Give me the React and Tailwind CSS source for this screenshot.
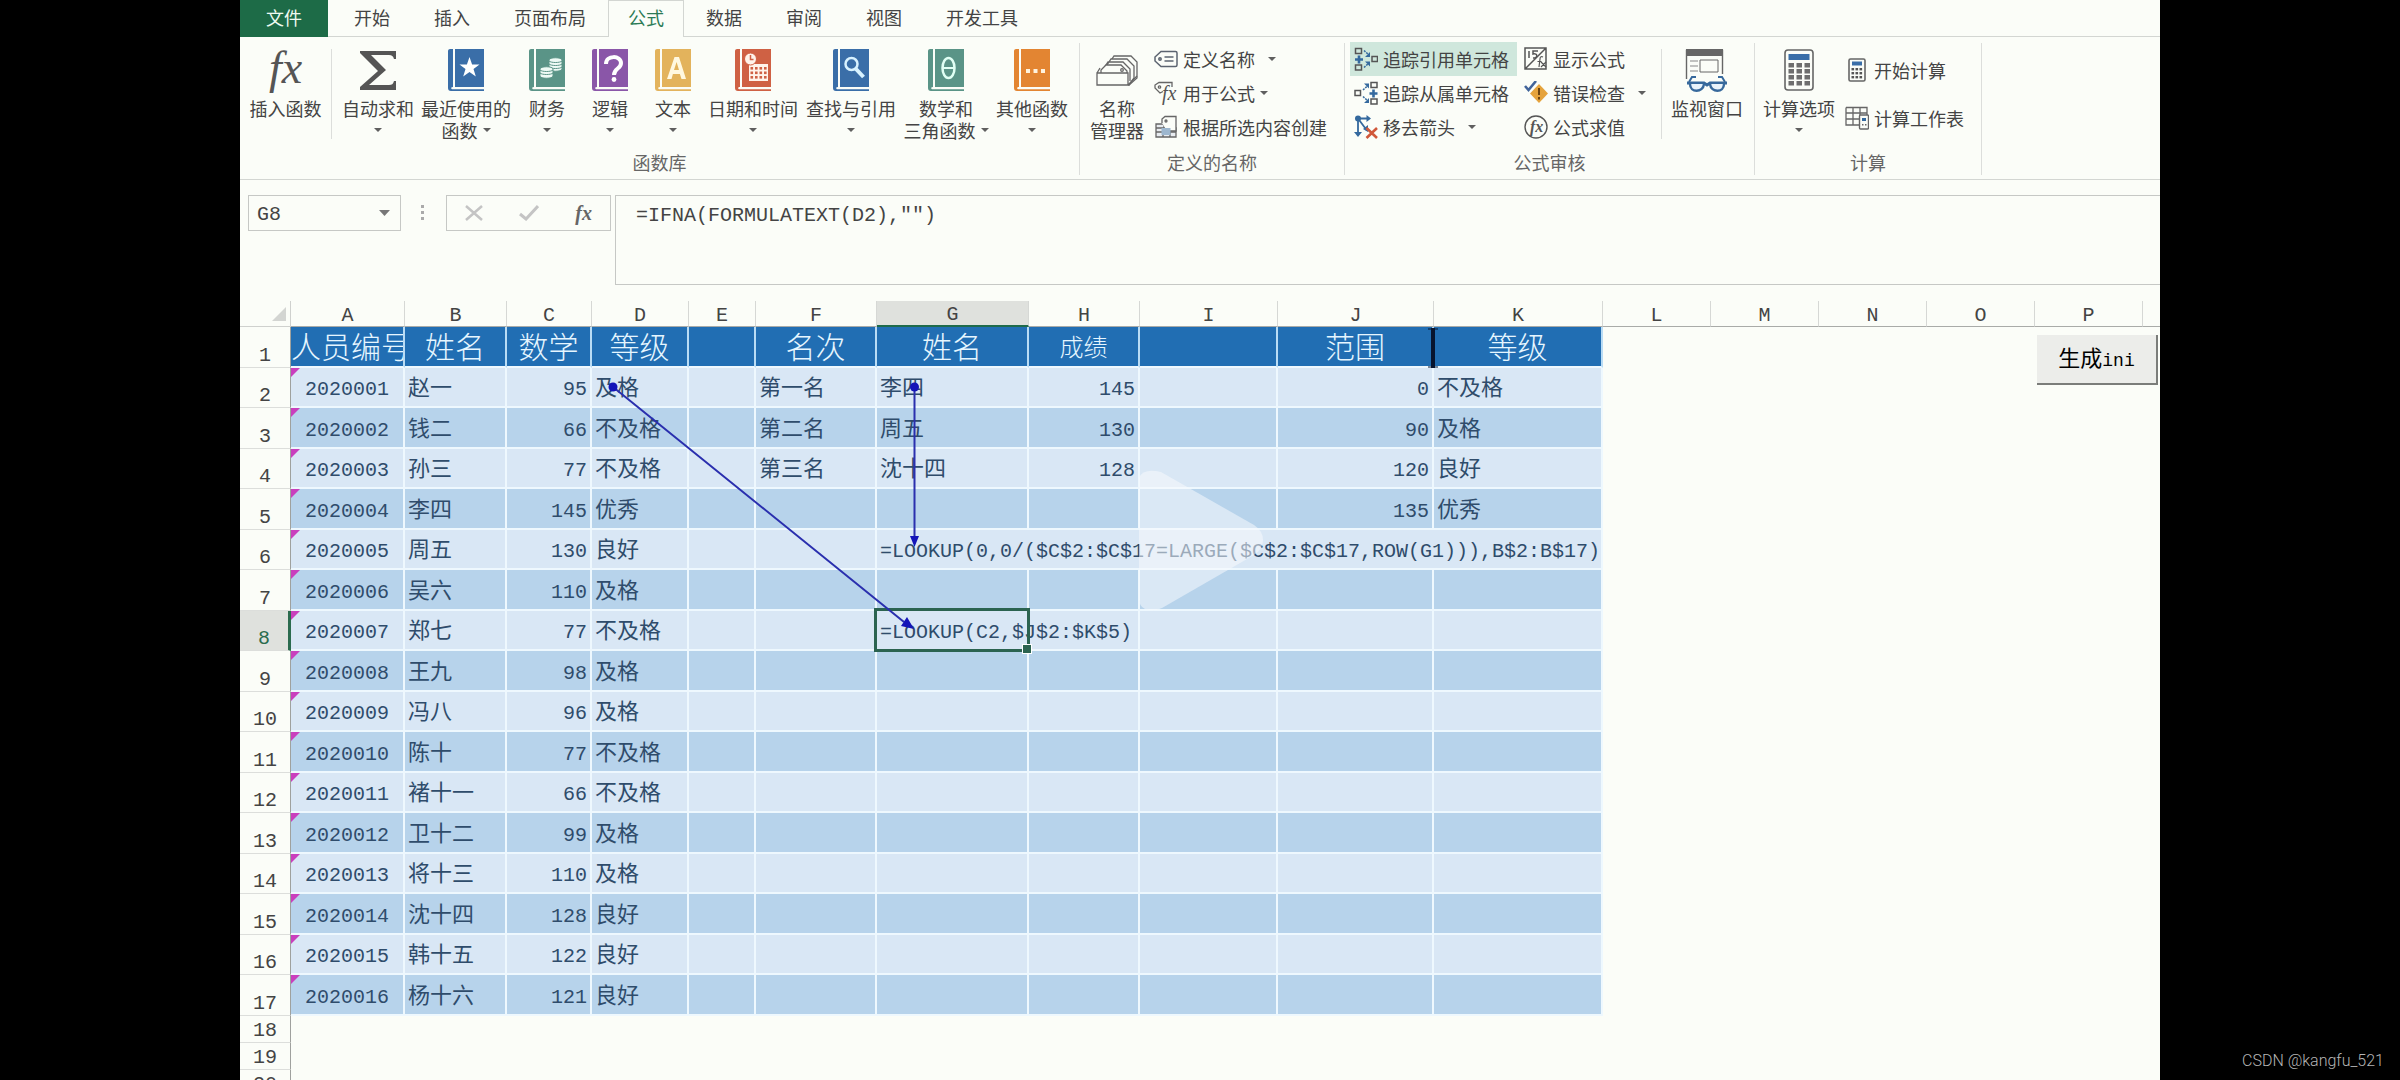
import React from 'react';

const tabs = ['开始', '插入', '页面布局', '公式', '数据', '审阅', '视图', '开发工具'];

const people = [
  ['2020001', '赵一', 95, '及格'],
  ['2020002', '钱二', 66, '不及格'],
  ['2020003', '孙三', 77, '不及格'],
  ['2020004', '李四', 145, '优秀'],
  ['2020005', '周五', 130, '良好'],
  ['2020006', '吴六', 110, '及格'],
  ['2020007', '郑七', 77, '不及格'],
  ['2020008', '王九', 98, '及格'],
  ['2020009', '冯八', 96, '及格'],
  ['2020010', '陈十', 77, '不及格'],
  ['2020011', '褚十一', 66, '不及格'],
  ['2020012', '卫十二', 99, '及格'],
  ['2020013', '将十三', 110, '及格'],
  ['2020014', '沈十四', 128, '良好'],
  ['2020015', '韩十五', 122, '良好'],
  ['2020016', '杨十六', 121, '良好'],
];

const ranking = [
  ['第一名', '李四', 145],
  ['第二名', '周五', 130],
  ['第三名', '沈十四', 128],
];

const grades = [
  [0, '不及格'],
  [90, '及格'],
  [120, '良好'],
  [135, '优秀'],
];

const letters = ['A', 'B', 'C', 'D', 'E', 'F', 'G', 'H', 'I', 'J', 'K', 'L', 'M', 'N', 'O', 'P'];

const Caret = () => (
  <svg className="shrink-0" width="8" height="4" viewBox="0 0 8 4" aria-hidden="true">
    <path d="M0 0h8L4 4z" fill="#5f5f5f" />
  </svg>
);

/* ---------- ribbon icons ---------- */

const Book = ({ color, children }) => (
  <svg width="36" height="42" viewBox="0 0 36 42" aria-hidden="true">
    <path d="M2 0h3v38c-2 0-2.500 1.500-1 2.200H36V42H3c-2 0-3-1-3-3V2c0-1.200 1-2 2-2z" fill={color} />
    <path d="M7 0h29v38H7z" fill={color} />
    {children}
  </svg>
);

const SigmaIcon = () => (
  <svg width="36" height="42" viewBox="0 0 36 42" aria-hidden="true">
    <path d="M0 2h36v8h-2c-1-3-2-4-5-4H11l15 15L9 36h20c3 0 4-1 5-4h2v9H0v-3l18-16L0 4z" fill="#555" />
  </svg>
);

const FxIcon = () => (
  <span className="h-[42px] font-['Liberation_Serif',serif] text-[46px] leading-[38px] italic text-[#555]">fx</span>
);

const StarBook = () => (
  <Book color="#3a6ea8">
    <path d="M21.500 8l2.600 7.500h7.400l-6 4.600 2.300 7.400-6.300-4.500-6.300 4.500 2.300-7.400-6-4.600h7.400z" fill="#fff" />
  </Book>
);

const MoneyBook = () => (
  <Book color="#5a9487">
    <g fill="#eefaf5" stroke="#5a9487" strokeWidth="1">
      <path d="M20 11c0-3 13-3 13 0v9c0 3-13 3-13 0z" />
      <path d="M20 12c2 2 11 2 13 0M20 15c2 2 11 2 13 0M20 18c2 2 11 2 13 0" fill="none" />
      <path d="M11 20c0-3 13-3 13 0v7c0 3-13 3-13 0z" />
      <path d="M11 21c2 2 11 2 13 0M11 24c2 2 11 2 13 0" fill="none" />
    </g>
  </Book>
);

const LogicBook = () => (
  <Book color="#8a56a8">
    <path d="M14 15c0-9 15-9 15-1 0 6-7 5-7 12" fill="none" stroke="#fff" strokeWidth="4" />
    <circle cx="22" cy="30.500" r="2.400" fill="#fff" />
  </Book>
);

const TextBook = () => (
  <Book color="#e3b35c">
    <path d="M12 30L19.500 8h4.500L31 30h-4.500l-1.600-5h-7L16.500 30zM19 21h5l-2.400-8z" fill="#fff8e0" fillRule="evenodd" />
  </Book>
);

const DateBook = () => (
  <Book color="#cf6144">
    <path d="M14 15h19v17H14z" fill="#fff3ea" />
    <g fill="#cf6144">
      {[18, 22.500, 27].map(y => [15.500, 20, 24.500, 29].map(x => <rect key={`${x}-${y}`} x={x} y={y} width="2.600" height="2.600" />))}
    </g>
    <circle cx="15.500" cy="10" r="6" fill="#fff3ea" stroke="#cf6144" />
    <path d="M15.500 6v4.500h3" fill="none" stroke="#cf6144" strokeWidth="1.500" />
  </Book>
);

const SearchBook = () => (
  <Book color="#3a6ea8">
    <circle cx="18.500" cy="15" r="6" fill="none" stroke="#d8f2ff" strokeWidth="2.500" />
    <path d="M23 20l7.500 8" stroke="#d8f2ff" strokeWidth="4" />
  </Book>
);

const ThetaBook = () => (
  <Book color="#5a9487">
    <ellipse cx="20.500" cy="19" rx="6" ry="10" fill="none" stroke="#e0fff4" strokeWidth="2.500" />
    <path d="M15 19h11" stroke="#e0fff4" strokeWidth="2" />
  </Book>
);

const MoreBook = () => (
  <Book color="#e38532">
    <path d="M12 20h4v4h-4zM19.500 20h4v4h-4zM27 20h4v4h-4z" fill="#fff3de" />
  </Book>
);

const ManagerIcon = () => (
  <svg width="42" height="42" viewBox="0 0 42 42" fill="#fbfdf8" stroke="#666" strokeWidth="1.300" aria-hidden="true">
    <path d="M14 13l4-6h17l6 6v16l-8 7z" />
    <path d="M11 16l4-6h16l7 7v12l-5 7zM8 19l4-6h15l7 7v12" />
    <path d="M5 24v-3l5-5h15l6 6v3" />
    <circle cx="26" cy="21" r="1.300" />
    <path d="M1 24h31v12H1zM1 24l3-5" />
    <path d="M32 36l9-9" />
  </svg>
);

const WatchIcon = () => (
  <svg width="44" height="44" viewBox="0 0 44 44" fill="none" aria-hidden="true">
    <path d="M1.500 30V1.500h36V25" stroke="#666" strokeWidth="1.400" />
    <path d="M1 0h37v7H1z" fill="#666" />
    <path d="M5 12h8M5 17h8M5 22h8" stroke="#888" strokeWidth="1.200" />
    <path d="M15 11h18v12H15z" stroke="#666" />
    <path d="M4 33l3-5h4M40 33l-3-5h-4" stroke="#37699c" strokeWidth="2" />
    <path d="M2 34h17l3 2 3-2h17" stroke="#37699c" strokeWidth="3" />
    <path d="M5 35c0 9 13 9 14 0M25 35c1 9 14 9 14 0" fill="#e9f3fb" stroke="#37699c" strokeWidth="2.400" />
  </svg>
);

const CalculatorIcon = ({ className }) => (
  <svg className={className} viewBox="0 0 30 42" aria-hidden="true">
    <rect x="1" y="1" width="28" height="40" rx="3" fill="#fbfdf8" stroke="#666" strokeWidth="1.600" />
    <path d="M4.500 5h21v6h-21z" fill="#3a6ea8" />
    <g fill="#6e6e6e">
      {[14, 20, 26, 32].map(y => [4.500, 12.500, 20.500].map(x => <rect key={`${x}-${y}`} x={x} y={y} width="5.500" height="4.500" />))}
    </g>
  </svg>
);

const SmallCalculatorIcon = () => (
  <svg width="18" height="24" viewBox="0 0 18 24" aria-hidden="true">
    <rect x="1" y="1" width="16" height="22" rx="1.500" fill="#fbfdf8" stroke="#666" strokeWidth="1.600" />
    <path d="M4 3.500h10v4H4z" fill="#3a6ea8" />
    <g fill="#555">
      {[10, 14, 18].map(y => [3.500, 7.500, 11.500].map(x => <rect key={`${x}-${y}`} x={x} y={y} width="2.600" height="2.400" />))}
    </g>
  </svg>
);

const small = { width: 24, height: 24, viewBox: '0 0 24 24', fill: 'none', 'aria-hidden': true, className: 'shrink-0' };

const TagIcon = () => (
  <svg {...small} stroke="#5c6470" strokeWidth="1.500">
    <path d="M7 4.500h14.500q1.500 0 1.500 1.500v12q0 1.500-1.500 1.500H7L1 14v-4z" />
    <circle cx="6" cy="12" r="1.200" />
    <path d="M10.500 10h9M10.500 14h9" />
  </svg>
);

const UseIcon = () => (
  <svg {...small} stroke="#666" strokeWidth="1.300">
    <path d="M9 10.500L6 12 1 7V4l4-2.500h13V6" />
    <circle cx="5.500" cy="6" r="1.200" />
    <text x="8" y="19" fontSize="20" fontStyle="italic" fontFamily="Liberation Serif, serif" fill="#555" stroke="none">fx</text>
  </svg>
);

const CreateIcon = () => (
  <svg {...small} stroke="#666" strokeWidth="1.300">
    <path d="M2 9h8v4h12v9H2z" fill="#e8ecf0" />
    <path d="M2 13h20M2 17h20M9 13v9M16 13v9" />
    <path d="M8 8V4l3-2.500h11V16H13" fill="#fbfdf8" />
    <path d="M7.500 13h9v7h-9z" fill="#9db7cf" stroke="none" />
    <circle cx="12" cy="6" r="1" />
  </svg>
);

const PrecedentIcon = () => (
  <svg {...small}>
    <path d="M1.500 1.500h6v5h-6zM1.500 18h6v5h-6zM18 9.500h5.500v5H18z" stroke="#555" strokeWidth="1.500" />
    <path d="M5 8.500v8M1 12.500h8" stroke="#34699e" strokeWidth="2.600" />
    <path d="M10 3.500l5 4.500M10 20.500l5-4.500" stroke="#34699e" strokeWidth="1.500" strokeDasharray="2 1" />
    <path d="M16 5v5h-5zM16 19.500v-5h-5z" fill="#34699e" />
  </svg>
);

const DependentIcon = () => (
  <svg {...small}>
    <path d="M17 1.500h6v5h-6zM17 18h6v5h-6zM1 9.500h5.500v5H1z" stroke="#555" strokeWidth="1.500" />
    <path d="M19.500 8.500v8M15.500 12.500h8" stroke="#34699e" strokeWidth="2.600" />
    <path d="M9 9l5-4.500M9 15.500l5 4.500" stroke="#34699e" strokeWidth="1.500" strokeDasharray="2 1" />
    <path d="M15 7.500v-5h-5zM15 17v5h-5z" fill="#34699e" />
  </svg>
);

const RemoveArrowIcon = () => (
  <svg {...small}>
    <path d="M4 3.500h11M4 3.500v16M4 3.500l9 12" stroke="#34699e" strokeWidth="1.800" />
    <circle cx="4" cy="3.500" r="3" fill="#34699e" />
    <path d="M12.500 0l4.500 3.500-4.500 3.500zM0 17l4 5 4-5zM14 10v7l-5-3z" fill="#34699e" />
    <path d="M12.500 13l10.500 10M23 13L12.500 23" stroke="#d0583a" strokeWidth="2.600" />
  </svg>
);

const ShowFormulaIcon = () => (
  <svg {...small} stroke="#555" strokeWidth="1.500">
    <path d="M1 1h21v21H1zM1.500 21.500L21.500 1.500" />
    <path d="M5 4v7M14 4h-5v3c5-1 5 4 0 4" />
    <path d="M19 10c-2-1-3 0-3 2l-1 8M13.500 14.500h4M17 20l5-5M17 15l5 5" strokeWidth="1.200" />
  </svg>
);

const ErrorIcon = () => (
  <svg {...small}>
    <path d="M15 3l9 9.500-9 9.500-9-9.500z" fill="#e5a33c" />
    <path d="M15 7v7M15 16v2.500" stroke="#6d4410" strokeWidth="2" />
    <path d="M1 5l3.500 4L12 0" stroke="#41649a" strokeWidth="2.600" />
  </svg>
);

const EvaluateIcon = () => (
  <svg {...small}>
    <circle cx="12" cy="12" r="11" stroke="#555" strokeWidth="1.400" />
    <text x="6" y="17" fontSize="16" fontStyle="italic" fontWeight="bold" fontFamily="Liberation Serif, serif" fill="#555">fx</text>
  </svg>
);

const CalcSheetIcon = () => (
  <svg {...small}>
    <path d="M1 1.500h21V9M14 19H1V1.500M1 7h21M1 13h13M8 1.500V19M15 1.500V9" stroke="#666" strokeWidth="1.300" />
    <rect x="14.500" y="9" width="9" height="14" rx="1" fill="#fbfdf8" stroke="#666" strokeWidth="1.400" />
    <path d="M17 12h4v3h-4z" fill="#34699e" />
    <path d="M17 18h1.500v1.500H17zM20 18h1.500v1.500H20z" fill="#666" />
  </svg>
);

/* ---------- ribbon parts ---------- */

const BigButton = ({ icon, lines, caret, width }) => (
  <button type="button" className={`flex shrink-0 flex-col items-center pt-3 ${width}`}>
    <span className="flex h-[42px] items-start justify-center">{icon}</span>
    <span className="mt-1.5 h-[22px] whitespace-nowrap leading-[22px]">{lines[0]}</span>
    <span className="flex h-[22px] items-center gap-[5px] whitespace-nowrap leading-[22px]">
      {lines[1]}
      {caret && <Caret />}
    </span>
  </button>
);

const SmallButton = ({ icon, label, caret, active }) => (
  <button type="button" className={`flex h-[34px] items-center gap-[5px] whitespace-nowrap pl-1 pr-2 ${active ? 'bg-[#cfe7dc]' : ''}`}>
    <span className="flex w-6 shrink-0 justify-center">{icon}</span>
    {label}
    {caret && <span className={caret}><Caret /></span>}
  </button>
);

const Group = ({ label, width, children }) => (
  <section aria-label={label} className={`flex shrink-0 flex-col ${width}`}>
    <div className="flex h-[114px]">{children}</div>
    <div className="text-center leading-[22px] text-[#666]">{label}</div>
  </section>
);

const Divider = () => <div className="my-3 w-px shrink-0 bg-[#dcdedb]" />;
const GroupDivider = () => <div className="mb-1 mt-1.5 w-px shrink-0 bg-[#dcdedb]" />;

const Ribbon = () => (
  <>
    <nav className="flex h-[37px] text-[#444]">
      <button type="button" className="w-[88px] bg-[#1d6b47] pb-1 text-[#eefaf0]">文件</button>
      <div className="w-1 border-b border-[#d3d6d2]" />
      {tabs.map(tab => (
        <button
          key={tab}
          type="button"
          className={tab === '公式'
            ? 'border-x border-t border-[#d3d6d2] px-[19px] pb-1 text-[#2b7a55]'
            : 'border-b border-[#d3d6d2] px-[22px] pb-[3px]'}
        >
          {tab}
        </button>
      ))}
      <div className="grow border-b border-[#d3d6d2]" />
    </nav>
    <div className="flex h-[143px] border-b border-[#d3d6d2] text-[#444]">
      <Group label="函数库" width="w-[839px]">
        <BigButton width="w-[91px]" icon={<FxIcon />} lines={['插入函数']} />
        <Divider />
        <BigButton width="ml-1 w-[84px]" icon={<SigmaIcon />} lines={['自动求和']} caret />
        <BigButton width="w-[92px]" icon={<StarBook />} lines={['最近使用的', '函数']} caret />
        <BigButton width="w-[70px]" icon={<MoneyBook />} lines={['财务']} caret />
        <BigButton width="w-[56px]" icon={<LogicBook />} lines={['逻辑']} caret />
        <BigButton width="w-[70px]" icon={<TextBook />} lines={['文本']} caret />
        <BigButton width="w-[90px]" icon={<DateBook />} lines={['日期和时间']} caret />
        <BigButton width="w-[106px]" icon={<SearchBook />} lines={['查找与引用']} caret />
        <BigButton width="w-[84px]" icon={<ThetaBook />} lines={['数学和', '三角函数']} caret />
        <BigButton width="w-[88px]" icon={<MoreBook />} lines={['其他函数']} caret />
      </Group>
      <GroupDivider />
      <Group label="定义的名称" width="w-[264px]">
        <BigButton width="ml-1 w-[66px]" icon={<ManagerIcon />} lines={['名称', '管理器']} />
        <div className="flex flex-col items-start pt-[5px]">
          <SmallButton icon={<TagIcon />} label="定义名称" caret="ml-2" />
          <SmallButton icon={<UseIcon />} label="用于公式" caret="ml-0" />
          <SmallButton icon={<CreateIcon />} label="根据所选内容创建" />
        </div>
      </Group>
      <GroupDivider />
      <Group label="公式审核" width="w-[409px]">
        <div className="ml-[5px] w-[170px] pt-[5px]">
          <SmallButton icon={<PrecedentIcon />} label="追踪引用单元格" active />
          <SmallButton icon={<DependentIcon />} label="追踪从属单元格" />
          <SmallButton icon={<RemoveArrowIcon />} label="移去箭头" caret="ml-2" />
        </div>
        <div className="w-[141px] pt-[5px]">
          <SmallButton icon={<ShowFormulaIcon />} label="显示公式" />
          <SmallButton icon={<ErrorIcon />} label="错误检查" caret="ml-2" />
          <SmallButton icon={<EvaluateIcon />} label="公式求值" />
        </div>
        <Divider />
        <BigButton width="w-[90px]" icon={<WatchIcon />} lines={['监视窗口']} />
      </Group>
      <GroupDivider />
      <Group label="计算" width="w-[226px]">
        <BigButton width="ml-0.5 w-[84px]" icon={<CalculatorIcon className="h-[42px] w-[30px]" />} lines={['计算选项']} caret />
        <div className="flex flex-col items-start gap-3.5 pt-4">
          <SmallButton icon={<SmallCalculatorIcon />} label="开始计算" />
          <SmallButton icon={<CalcSheetIcon />} label="计算工作表" />
        </div>
      </Group>
      <GroupDivider />
    </div>
  </>
);

const FormulaBar = () => (
  <div className="flex items-start pl-2 pt-[15px] font-['Liberation_Mono','Noto_Sans_CJK_SC',monospace] text-xl text-[#444]">
    <div className="flex h-9 w-[153px] items-center border border-[#c6c8c5] pr-2.5">
      <input aria-label="名称框" defaultValue="G8" className="w-full min-w-0 bg-transparent pl-2 pt-1 outline-none" />
      <button type="button" aria-label="选择名称">
        <svg width="11" height="6" viewBox="0 0 11 6"><path d="M0 0h11L5.500 6z" fill="#777" /></svg>
      </button>
    </div>
    <svg className="ml-5 mt-2.5" width="4" height="16" viewBox="0 0 4 16" fill="#aaa" aria-hidden="true">
      <path d="M0 0h3v3H0zM0 6h3v3H0zM0 12h3v3H0z" />
    </svg>
    <div className="ml-[21px] flex h-9 w-[165px] items-center justify-between border border-[#c6c8c5] px-[18px]">
      <button type="button" aria-label="取消">
        <svg width="18" height="16" viewBox="0 0 18 16"><path d="M1 1l16 14M17 1L1 15" stroke="#c4c4c4" strokeWidth="2.500" /></svg>
      </button>
      <button type="button" aria-label="输入">
        <svg width="20" height="16" viewBox="0 0 20 16"><path d="M1 9l6 5L19 1" fill="none" stroke="#c4c4c4" strokeWidth="3" /></svg>
      </button>
      <button type="button" aria-label="插入函数" className="font-['Liberation_Serif',serif] font-bold italic leading-none text-[#666]">fx</button>
    </div>
    <textarea
      aria-label="编辑栏"
      defaultValue={'=IFNA(FORMULATEXT(D2),"")'}
      className="ml-1 h-[90px] grow resize-none overflow-hidden border border-r-0 border-[#c6c8c5] bg-transparent pl-5 pt-2 leading-6 outline-none"
    />
  </div>
);

/* ---------- worksheet ---------- */

const Cell = ({ dark, align = '', cjk, span, children, className = '' }) => (
  <td
    colSpan={span}
    className={`whitespace-nowrap border-b-2 border-r-2 border-[#eef8fe] px-[3px] pt-1.5 leading-7 ${dark ? 'bg-[#b7d3eb]' : 'bg-[#d9e7f5]'} ${align} ${cjk ? 'text-[22px]' : 'text-xl'} ${className}`}
  >
    {children}
  </td>
);

const HeadCell = ({ children, className = 'text-3xl' }) => (
  <th scope="col" className={`overflow-hidden whitespace-nowrap border-b-2 border-r-2 border-[#eef8fe] border-r-[#b9dcf5] bg-[#216eb3] p-0 pt-[7px] font-light leading-[30px] text-[#e6f6ff] ${className}`}>
    {children}
  </th>
);

const RowNumber = ({ n }) => (
  <th
    scope="row"
    className={`border-b border-r border-b-[#dcdedb] p-0 text-center align-bottom font-normal leading-[22px] ${n === 8 ? 'border-r-3 border-r-[#2b6b4e] bg-[#dfe1dd] text-[#2b6b4e]' : 'border-r-[#9fa19e] text-[#444]'}`}
  >
    {n}
  </th>
);

const DataRow = ({ n }) => {
  const [id, name, score, grade] = people[n - 2];
  const rank = ranking[n - 2] || [];
  const scale = grades[n - 2] || [];
  const dark = n % 2 === 1;

  return (
    <tr className={dark ? 'h-[41px]' : 'h-10'}>
      <RowNumber n={n} />
      <Cell dark={dark} align="text-center" className="relative">
        <svg className="absolute left-0 top-0" width="9" height="9" viewBox="0 0 9 9" aria-hidden="true">
          <path d="M0 0h9L0 9z" fill="#c93fbd" />
        </svg>
        {id}
      </Cell>
      <Cell dark={dark} cjk>{name}</Cell>
      <Cell dark={dark} align="text-right">{score}</Cell>
      <Cell dark={dark} cjk>{grade}</Cell>
      <Cell dark={dark} />
      <Cell dark={dark} cjk>{rank[0]}</Cell>
      {n === 6 ? (
        <Cell span={5}>=LOOKUP(0,0/($C$2:$C$17=LARGE($C$2:$C$17,ROW(G1))),B$2:B$17)</Cell>
      ) : (
        <>
          {n === 8 ? (
            <Cell className="relative">
              =LOOKUP(C2,$J$2:$K$5)
              <span className="absolute -bottom-[3px] -left-[3px] -right-[3px] -top-[3px] border-[3px] border-[#2b6350]">
                <span className="absolute -bottom-1 -right-1 size-2 bg-[#2b6350] outline-1 outline-white" />
              </span>
            </Cell>
          ) : (
            <Cell dark={dark} cjk>{rank[1]}</Cell>
          )}
          <Cell dark={dark} align="text-right">{rank[2]}</Cell>
          <Cell dark={dark} />
          <Cell dark={dark} align="text-right">{scale[0]}</Cell>
          <Cell dark={dark} cjk>{scale[1]}</Cell>
        </>
      )}
    </tr>
  );
};

const Sheet = () => (
  <div className="relative pt-4">
    <table className="w-full table-fixed border-separate border-spacing-0 font-['Liberation_Mono','Noto_Sans_CJK_SC',monospace] text-xl text-[#2f4c6b]">
      <colgroup>
        <col className="w-[51px]" />
        <col className="w-[114px]" />
        <col className="w-[102px]" />
        <col className="w-[85px]" />
        <col className="w-[97px]" />
        <col className="w-[67px]" />
        <col className="w-[121px]" />
        <col className="w-[152px]" />
        <col className="w-[111px]" />
        <col className="w-[138px]" />
        <col className="w-[156px]" />
        <col className="w-[169px]" />
        <col className="w-[108px]" />
        <col className="w-[108px]" />
        <col className="w-[108px]" />
        <col className="w-[108px]" />
        <col className="w-[108px]" />
        <col />
      </colgroup>
      <thead>
        <tr className="h-[26px] text-[#444]">
          <th className="border-b border-r border-[#cfd1ce] p-0" aria-label="全选">
            <svg className="ml-auto mr-1" width="14" height="14" viewBox="0 0 14 14"><path d="M14 0v14H0z" fill="#d3d5d2" /></svg>
          </th>
          {letters.map(letter => (
            <th
              key={letter}
              scope="col"
              className={`border-r border-r-[#d6d8d5] p-0 pt-1 font-normal leading-5 ${letter === 'G' ? 'border-b-2 border-b-[#1f6b4a] bg-[#dfe1dd]' : 'border-b border-b-[#a9aba8]'}`}
            >
              {letter}
            </th>
          ))}
          <th className="border-b border-[#a9aba8] p-0" />
        </tr>
      </thead>
      <tbody>
        <tr className="h-[41px]">
          <RowNumber n={1} />
          <HeadCell className="text-left text-3xl">人员编号</HeadCell>
          <HeadCell>姓名</HeadCell>
          <HeadCell>数学</HeadCell>
          <HeadCell>等级</HeadCell>
          <HeadCell />
          <HeadCell>名次</HeadCell>
          <HeadCell>姓名</HeadCell>
          <HeadCell className="text-2xl">成绩</HeadCell>
          <HeadCell />
          <HeadCell>范围</HeadCell>
          <HeadCell>等级</HeadCell>
        </tr>
        {people.map((person, i) => <DataRow key={person[0]} n={i + 2} />)}
        {[18, 19, 20].map(n => (
          <tr key={n} className="h-[27px]">
            <RowNumber n={n} />
          </tr>
        ))}
      </tbody>
    </table>

    {/* trace arrows, column resize cursor and the player's start mark float over the grid */}
    <svg className="pointer-events-none absolute left-0 top-0" width="1400" height="400" viewBox="0 0 1400 400" aria-hidden="true">
      <g stroke="#2a2fae" strokeWidth="2" fill="#1414b8">
        <path d="M373 102L664 337M674.500 102V254" />
        <circle cx="373" cy="102" r="4.500" stroke="none" />
        <circle cx="674.500" cy="102" r="4.500" stroke="none" />
        <path d="M674 344l-13-3 6-9zM674.500 262l-4.500-11h9z" stroke="none" />
      </g>
      <path d="M1193 43v40M1188 44h10M1188 82h10" stroke="#07142e" strokeWidth="1" />
      <path d="M1193 43v40" stroke="#07142e" strokeWidth="4" />
      <path d="M899 193q4-10 22-6l93 53q9 6 9 15t-9 15l-92 53q-8 4-17 1-6-3-6-10z" fill="#f8fafd" fillOpacity="0.540" />
    </svg>

    <button
      type="button"
      className="absolute right-0.5 top-[50px] h-[50px] w-[121px] border-b-2 border-r-2 border-[#7b7d7a] bg-[#ecedea] pt-1 font-['Liberation_Mono','Noto_Sans_CJK_SC',monospace] text-[22px] text-black"
    >
      生成<span className="text-lg">ini</span>
    </button>
  </div>
);

export default function App() {
  return (
    <div className="relative h-screen overflow-hidden bg-black px-[10%] font-['Noto_Sans_CJK_SC',sans-serif] text-lg">
      <main className="h-full overflow-hidden bg-[#fbfdf8]">
        <Ribbon />
        <FormulaBar />
        <Sheet />
      </main>
      <div className="absolute bottom-[7px] right-4 font-['Roboto',sans-serif] text-base font-light text-[#b5b5b5]">CSDN @kangfu_521</div>
    </div>
  );
}
